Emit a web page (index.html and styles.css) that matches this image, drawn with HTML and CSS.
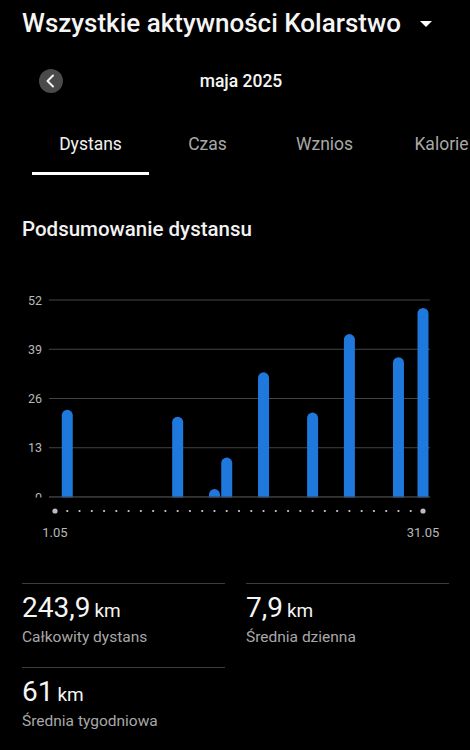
FILE: index.html
```html
<!DOCTYPE html>
<html lang="pl">
<head>
    <meta charset="UTF-8">
    <meta name="viewport" content="width=device-width, initial-scale=1.0">
    <title>Wszystkie aktywności</title>
    <link rel="stylesheet" href="styles.css">
</head>
<body>
    <header class="top-bar">
        <h1 class="page-title">Wszystkie aktywności Kolarstwo</h1>
        <svg class="dropdown-icon" width="12" height="6" viewBox="0 0 12 6">
            <path d="M0 0 L12 0 L6 6 Z" fill="#ffffff"/>
        </svg>
    </header>

    <div class="date-nav">
        <button class="back-btn" aria-label="Poprzedni">
            <svg width="24" height="24" viewBox="0 0 24 24">
                <path d="M14 6.5 L8.5 12 L14 17.5" fill="none" stroke="#f2f2f2" stroke-width="2" stroke-linecap="round" stroke-linejoin="round"/>
            </svg>
        </button>
        <div class="date-title">maja 2025</div>
        <div class="nav-spacer"></div>
    </div>

    <nav class="tabs">
        <div class="tab active">Dystans</div>
        <div class="tab">Czas</div>
        <div class="tab">Wznios</div>
        <div class="tab">Kalorie</div>
    </nav>

    <h2 class="section-title">Podsumowanie dystansu</h2>

    <svg class="chart" id="chart" width="470" height="260" viewBox="0 0 470 260"></svg>

    <section class="stats">
        <div class="stat">
            <div class="stat-value">243,9<span class="unit">km</span></div>
            <div class="stat-label">Całkowity dystans</div>
        </div>
        <div class="stat">
            <div class="stat-value">7,9<span class="unit">km</span></div>
            <div class="stat-label">Średnia dzienna</div>
        </div>
        <div class="stat">
            <div class="stat-value">61<span class="unit">km</span></div>
            <div class="stat-label">Średnia tygodniowa</div>
        </div>
    </section>

    <div class="bottom-bar"></div>

<script>
    // Daily distances (km) for May 2025, day -> value
    const rides = { 2: 23, 11: 21.2, 14: 2.1, 15: 10.4, 18: 32.9, 22: 22.3, 25: 43, 29: 36.9, 31: 49.9 };

    const svgNS = 'http://www.w3.org/2000/svg';
    const chart = document.getElementById('chart');

    const left = 49, right = 430;
    const zeroY = 212, topY = 15, maxVal = 52;
    const firstX = 55, lastX = 423;
    const step = (lastX - firstX) / 30;

    function el(name, attrs, text) {
        const node = document.createElementNS(svgNS, name);
        for (const k in attrs) node.setAttribute(k, attrs[k]);
        if (text !== undefined) node.textContent = text;
        chart.appendChild(node);
        return node;
    }

    // Grid lines + y labels
    [0, 13, 26, 39, 52].forEach(function (v) {
        const y = zeroY - (zeroY - topY) * v / maxVal;
        el('line', { x1: left, x2: right, y1: y, y2: y, stroke: '#444444', 'stroke-width': 1 });
        el('text', { x: 42, y: y + 4.5, 'text-anchor': 'end', class: 'axis-label' }, v);
    });

    // Bars
    for (const day in rides) {
        const x = firstX + (day - 1) * step;
        const h = (zeroY - topY) * rides[day] / maxVal;
        el('rect', { x: x - 5.5, y: zeroY - h, width: 11, height: h + 5.5, rx: 5.5, fill: '#1f78db' });
    }
    // cover the rounded bottoms below the baseline
    el('rect', { x: 0, y: zeroY + 0.5, width: 470, height: 8, fill: '#000000' });
    el('line', { x1: left, x2: right, y1: zeroY, y2: zeroY, stroke: '#444444', 'stroke-width': 1 });

    // Day dots
    for (let d = 1; d <= 31; d++) {
        const x = firstX + (d - 1) * step;
        const big = d === 1 || d === 31;
        el('circle', { cx: x, cy: 226, r: big ? 2.6 : 1.1, fill: big ? '#bdbdbd' : '#cfcfcf' });
    }

    el('text', { x: firstX, y: 252, 'text-anchor': 'middle', class: 'date-label' }, '1.05');
    el('text', { x: lastX, y: 252, 'text-anchor': 'middle', class: 'date-label' }, '31.05');
</script>
</body>
</html>
```

FILE: styles.css
```css
body {
    margin: 0;
    background-color: #000000;
    color: #ffffff;
    font-family: Roboto, "Noto Sans", sans-serif;
    width: 470px;
    overflow: hidden;
}

.top-bar {
    display: flex;
    align-items: center;
    justify-content: space-between;
    height: 46px;
    padding: 0 38px 0 22px;
}
.page-title {
    margin: 0;
    font-size: 26px;
    font-weight: 500;
    line-height: 46px;
    color: #f5f5f5;
    white-space: nowrap;
}
.dropdown-icon {
    margin-top: 2px;
}

.date-nav {
    display: flex;
    align-items: center;
    height: 70px;
    padding: 0 27px 0 39px;
}
.back-btn {
    width: 24px;
    height: 24px;
    padding: 0;
    border: none;
    border-radius: 50%;
    background-color: #4a4a4a;
    display: flex;
    align-items: center;
    justify-content: center;
}
.nav-spacer {
    width: 24px;
}
.date-title {
    flex: 1;
    text-align: center;
    font-size: 17.5px;
    font-weight: 500;
    color: #f5f5f5;
}

.tabs {
    display: flex;
    padding-left: 32px;
    overflow: hidden;
}
.tab {
    flex: 0 0 117px;
    text-align: center;
    font-size: 17.5px;
    line-height: 20px;
    padding: 18px 0 18px;
    border-bottom: 3px solid transparent;
    color: #a8a8a8;
    white-space: nowrap;
}
.tab.active {
    color: #f2f2f2;
    border-bottom-color: #ffffff;
}

.section-title {
    margin: 0;
    padding: 44px 22px 0;
    font-size: 20.5px;
    font-weight: 500;
    line-height: 20px;
    color: #f2f2f2;
}

.chart {
    display: block;
    margin-top: 46px;
}
.axis-label {
    font-family: Roboto, sans-serif;
    font-size: 12.5px;
    fill: #b8b8b8;
}
.date-label {
    font-family: Roboto, sans-serif;
    font-size: 13px;
    fill: #b8b8b8;
}

.stats {
    display: grid;
    grid-template-columns: 1fr 1fr;
    column-gap: 21px;
    row-gap: 20px;
    margin-top: 38px;
    padding: 0 21px 0 22px;
}
.stat {
    border-top: 1px solid #3c3c3c;
    padding-top: 8px;
}
.stat-value {
    font-size: 28px;
    line-height: 32px;
    color: #f5f5f5;
}
.unit {
    font-size: 19px;
    margin-left: 4px;
}
.stat-label {
    font-size: 15.5px;
    line-height: 20px;
    color: #a8a8a8;
}

.bottom-bar {
    height: 3px;
    margin-top: 20px;
    background-color: #222222;
}
```
